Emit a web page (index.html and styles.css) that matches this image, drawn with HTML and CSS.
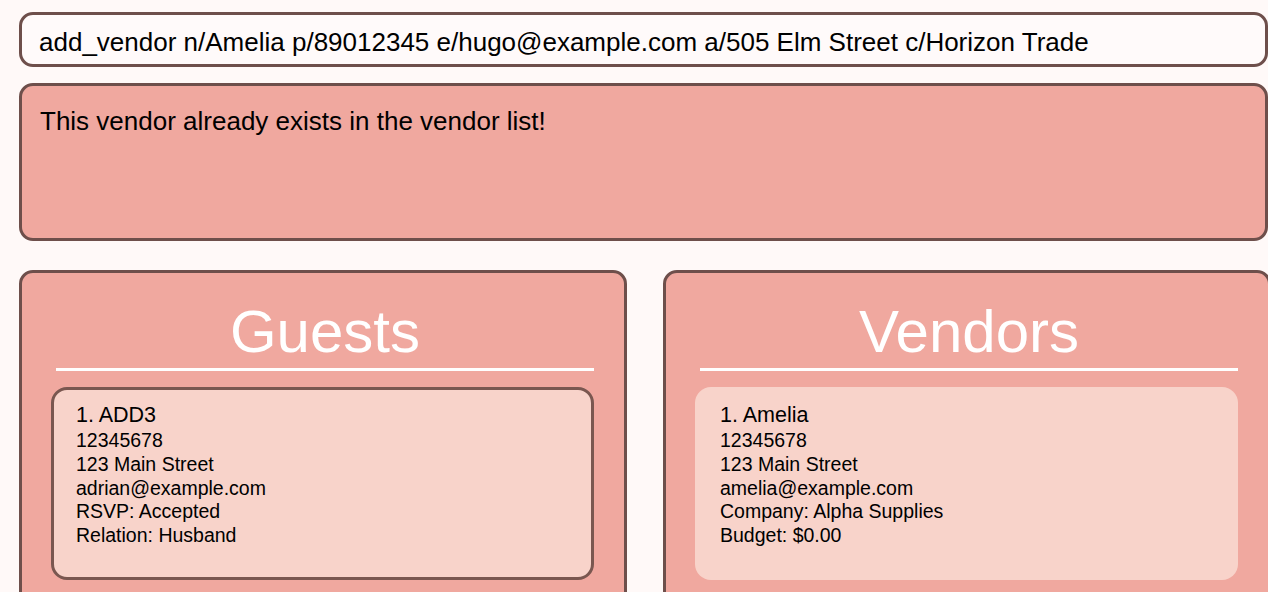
FILE: index.html
```html
<!DOCTYPE html>
<html>
<head>
<meta charset="utf-8">
<link rel="stylesheet" href="styles.css">
</head>
<body>
<div class="app">
  <div class="command-box">add_vendor n/Amelia p/89012345 e/hugo@example.com a/505 Elm Street c/Horizon Trade</div>
  <div class="result-box">This vendor already exists in the vendor list!</div>
  <div class="panels">
    <section class="panel">
      <h1 class="panel-title">Guests</h1>
      <div class="panel-rule"></div>
      <div class="card card-selected">
        <div class="card-name">1. ADD3</div>
        <div class="card-line">12345678</div>
        <div class="card-line">123 Main Street</div>
        <div class="card-line">adrian@example.com</div>
        <div class="card-line">RSVP: Accepted</div>
        <div class="card-line">Relation: Husband</div>
      </div>
    </section>
    <section class="panel">
      <h1 class="panel-title">Vendors</h1>
      <div class="panel-rule"></div>
      <div class="card">
        <div class="card-name">1. Amelia</div>
        <div class="card-line">12345678</div>
        <div class="card-line">123 Main Street</div>
        <div class="card-line">amelia@example.com</div>
        <div class="card-line">Company: Alpha Supplies</div>
        <div class="card-line">Budget: $0.00</div>
      </div>
    </section>
  </div>
</div>
</body>
</html>
```
FILE: styles.css
```css
html, body {
  margin: 0;
  padding: 0;
  background: #fff9f8;
  overflow: hidden;
  font-family: "Liberation Sans", Arial, sans-serif;
  color: #000;
}
.app {
  box-sizing: border-box;
  padding: 12px 0 0 19px;
  width: 1268px;
  height: 592px;
  overflow: hidden;
}
.command-box {
  box-sizing: border-box;
  width: 1249px;
  height: 55px;
  border: 3px solid #6e4f4b;
  border-radius: 14px;
  background: #fffafa;
  padding: 12px 0 0 17px;
  font-size: 26px;
  line-height: 30px;
  white-space: nowrap;
}
.result-box {
  box-sizing: border-box;
  width: 1249px;
  height: 158px;
  margin-top: 16px;
  border: 3px solid #6e4f4b;
  border-radius: 14px;
  background: #f0a89f;
  padding: 20px 0 0 18px;
  font-size: 26px;
  line-height: 30px;
}
.panels {
  display: grid;
  grid-template-columns: 608px 608px;
  column-gap: 36px;
  margin-top: 29px;
}
.panel {
  box-sizing: border-box;
  height: 360px;
  border: 3px solid #6e4f4b;
  border-radius: 14px;
  background: #f0a89f;
  padding-top: 24px;
}
.panel-title {
  margin: 0 0 0 34px;
  width: 538px;
  text-align: center;
  font-weight: normal;
  font-size: 60px;
  line-height: 69px;
  color: #ffffff;
}
.panel-rule {
  margin: 2px 0 0 34px;
  width: 538px;
  height: 3px;
  background: #ffffff;
}
.card {
  box-sizing: border-box;
  margin: 16px 0 0 29px;
  width: 543px;
  height: 193px;
  border: 3px solid transparent;
  border-radius: 16px;
  background: #f8d3ca;
  padding: 11px 0 0 22px;
}
.card-selected {
  border-color: #7a5750;
}
.card-name {
  font-size: 21.5px;
  line-height: 28px;
}
.card-line {
  font-size: 19.5px;
  line-height: 23.8px;
}
```
